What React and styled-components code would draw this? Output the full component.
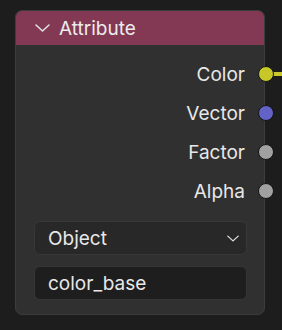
import React from "react";
import styled, { createGlobalStyle } from "styled-components";

const Global = createGlobalStyle`
  html, body { margin: 0; padding: 0; background: #1d1d1d; }
  body { width: 282px; height: 330px; overflow: hidden; font-family: Inter, "DejaVu Sans", sans-serif; }
`;

const Canvas = styled.div`
  position: relative;
  width: 282px;
  height: 330px;
  padding: 10px 0 0 15px;
  box-sizing: border-box;
`;

const Link = styled.div`
  position: absolute;
  left: 265px;
  top: 72px;
  width: 17px;
  height: 3.5px;
  background: #c9c92c;
`;

const GridLine = styled.div`
  position: absolute;
  left: 280px;
  top: 0;
  width: 1px;
  height: 330px;
  background: #1a1a1a;
`;

const Node = styled.div`
  position: relative;
  width: 250px;
  height: 305px;
  box-sizing: border-box;
  background: #303030;
  border: 1px solid #3c3c3c;
  border-radius: 7px;
  display: flex;
  flex-direction: column;
`;

const Header = styled.div`
  height: 34px;
  background: #833953;
  border-radius: 6px 6px 0 0;
  display: flex;
  align-items: center;
  gap: 9px;
  padding-left: 19px;
  color: #ececec;
  font-size: 19px;
`;

const Outputs = styled.div`
  display: flex;
  flex-direction: column;
  padding-top: 10px;
`;

const Row = styled.div`
  position: relative;
  height: 39px;
  display: flex;
  align-items: center;
  justify-content: flex-end;
  padding-right: 19px;
  color: #e8e8e8;
  font-size: 19px;
`;

const Socket = styled.span`
  position: absolute;
  right: -10px;
  top: 50%;
  width: 14px;
  height: 14px;
  margin-top: -8.5px;
  border-radius: 50%;
  background: ${(p) => p.$color};
  border: 1.5px solid #151515;
`;

const Controls = styled.div`
  display: flex;
  flex-direction: column;
  gap: 11px;
  padding: 10px 17px 0 18px;
`;

const Select = styled.div`
  height: 34px;
  box-sizing: border-box;
  background: #282828;
  border: 1px solid #383838;
  border-radius: 6px;
  display: flex;
  align-items: center;
  justify-content: space-between;
  padding: 0 7px 0 13px;
  color: #e8e8e8;
  font-size: 19px;
`;

const Field = styled.div`
  height: 34px;
  box-sizing: border-box;
  background: #1e1e1e;
  border: 1px solid #363636;
  border-radius: 6px;
  display: flex;
  align-items: center;
  padding: 0 13px;
  color: #e8e8e8;
  font-size: 19px;
`;

const Chevron = ({ w = 15, h = 8 }) => (
  <svg width={w} height={h} viewBox="0 0 15 8" fill="none">
    <path d="M1 1 L7.5 7 L14 1" stroke="#e0e0e0" strokeWidth="1.6" strokeLinecap="round" strokeLinejoin="round" />
  </svg>
);

const outputs = [
  { name: "Color", color: "#c7c729" },
  { name: "Vector", color: "#6363c7" },
  { name: "Factor", color: "#a1a1a1" },
  { name: "Alpha", color: "#a1a1a1" },
];

export default function App() {
  return (
    <>
      <Global />
      <Canvas>
        <GridLine />
        <Link />
        <Node>
          <Header>
            <Chevron />
            <span>Attribute</span>
          </Header>
          <Outputs>
            {outputs.map((o) => (
              <Row key={o.name}>
                {o.name}
                <Socket $color={o.color} />
              </Row>
            ))}
          </Outputs>
          <Controls>
            <Select>
              <span>Object</span>
              <Chevron w={12} h={7} />
            </Select>
            <Field>color_base</Field>
          </Controls>
        </Node>
      </Canvas>
    </>
  );
}
